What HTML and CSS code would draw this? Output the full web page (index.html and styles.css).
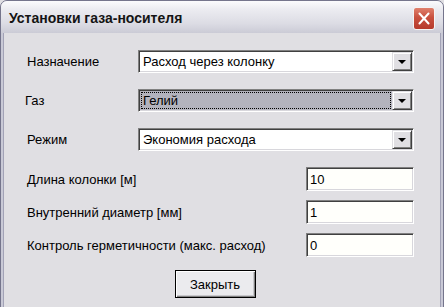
FILE: index.html
```html
<!DOCTYPE html>
<html lang="ru">
<head>
  <meta charset="UTF-8" />
  <title>Установки газа-носителя</title>
  <link rel="stylesheet" href="styles.css">
</head>
<body>
  <div class="window">
    <div class="titlebar">
      <span class="title">Установки газа-носителя</span>
      <div class="close">
        <svg width="22" height="23" viewBox="0 0 22 23">
          <line x1="6" y1="6" x2="16" y2="17" stroke="#fff" stroke-width="2.2" stroke-linecap="round" />
          <line x1="16" y1="6" x2="6" y2="17" stroke="#fff" stroke-width="2.2" stroke-linecap="round" />
        </svg>
      </div>
    </div>

    <div class="frame">
      <div class="client">
        <div class="combo-row">
          <span class="label">Назначение</span>
          <div class="combo">
            <span class="combo-text">Расход через колонку</span>
            <span class="combo-btn"><span class="arrow"></span></span>
          </div>
        </div>
        <div class="combo-row">
          <span class="label label-gas">Газ</span>
          <div class="combo focused">
            <span class="combo-text">Гелий</span>
            <span class="combo-btn"><span class="arrow"></span></span>
          </div>
        </div>
        <div class="combo-row">
          <span class="label">Режим</span>
          <div class="combo">
            <span class="combo-text">Экономия расхода</span>
            <span class="combo-btn"><span class="arrow"></span></span>
          </div>
        </div>

        <div class="field-row first">
          <span class="label">Длина колонки [м]</span>
          <input class="edit" type="text" value="10">
        </div>
        <div class="field-row">
          <span class="label">Внутренний диаметр [мм]</span>
          <input class="edit" type="text" value="1">
        </div>
        <div class="field-row">
          <span class="label">Контроль герметичности (макс. расход)</span>
          <input class="edit" type="text" value="0">
        </div>

        <div class="actions">
          <button class="btn">Закрыть</button>
        </div>
      </div>
    </div>
  </div>
</body>
</html>
```

FILE: styles.css
```css
html, body { margin: 0; overflow: hidden; }
body { font-family: "Liberation Sans", Arial, sans-serif; font-size: 13px; color: #000; background: #e0dfe3; }

.window {
  width: 444px; height: 320px; box-sizing: border-box;
  border: 1px solid #75758c; border-radius: 7px 7px 0 0; overflow: hidden;
  background: #c9c9d6;
}
.titlebar {
  height: 32px; display: flex; align-items: center; justify-content: space-between;
  padding: 0 8px 0 8px;
  background: linear-gradient(#fbfbfd, #ececf1 25%, #dcdce4 70%, #cbcbd6);
}
.title { font-weight: bold; font-size: 14px; color: #141414; margin-top: 1px; }
.close {
  width: 22px; height: 23px; margin-top: 3px; border-radius: 3px;
  border: 1px solid #f4f4f4; box-sizing: border-box;
  background: linear-gradient(#e0806c, #c8503e 45%, #b63a2c);
  display: flex; align-items: center; justify-content: center;
}
.close svg { display: block; }

.frame { padding: 0 2px; height: 100%; }
.client {
  height: 100%; box-sizing: border-box;
  background: #e0dfe3; border-left: 1px solid #a2a2b6; border-right: 1px solid #a2a2b6;
  padding: 17px 26px 0 23px;
}

.combo-row { display: flex; align-items: center; height: 23px; }
.combo-row + .combo-row { margin-top: 16px; }
.combo-row .label { width: 111px; }
.label-gas { margin-left: -2px; padding-right: 2px; }

.combo {
  flex: 1; height: 23px; box-sizing: border-box; display: flex;
  border-top: 1px solid #808080; border-left: 1px solid #808080;
  border-right: 1px solid #fff; border-bottom: 1px solid #fff;
  box-shadow: inset 1px 1px #404040, inset -1px -1px #d8d7dc;
  background: #fff; padding: 1px;
}
.combo-text { flex: 1; padding-left: 3px; line-height: 19px; white-space: nowrap; }
.combo.focused .combo-text {
  background: #b3b3bd; outline: 1px dotted #000; outline-offset: -2px;
}
.combo-btn {
  width: 20px; box-sizing: border-box; background: #e0dfe3;
  border-top: 1px solid #e0dfe3; border-left: 1px solid #e0dfe3;
  border-right: 1px solid #404040; border-bottom: 1px solid #404040;
  box-shadow: inset 1px 1px #fff, inset -1px -1px #808080;
  display: flex; align-items: center; justify-content: center;
}
.arrow {
  width: 0; height: 0; border-left: 4px solid transparent; border-right: 4px solid transparent;
  border-top: 4px solid #000; margin-top: 1px;
}

.field-row { display: flex; align-items: center; justify-content: space-between; margin-top: 9px; }
.field-row.first { margin-top: 16px; }
.edit {
  width: 108px; height: 24px; box-sizing: border-box; margin: 0; padding: 1px 3px 0;
  font: inherit; color: #000; background: #fffffb;
  border-top: 1px solid #808080; border-left: 1px solid #808080;
  border-right: 1px solid #fff; border-bottom: 1px solid #fff;
  box-shadow: inset 1px 1px #404040, inset -1px -1px #d8d7dc;
  outline: none;
}

.actions { display: flex; justify-content: center; margin-top: 13px; padding-right: 11px; }
.btn {
  width: 81px; height: 28px; font: inherit; color: #000; padding: 0;
  background: #ebebee; border: 1px solid #000;
  box-shadow: inset 1px 1px #fff, inset -1px -1px #808080, inset -2px -2px #c8c8cc;
}
```
